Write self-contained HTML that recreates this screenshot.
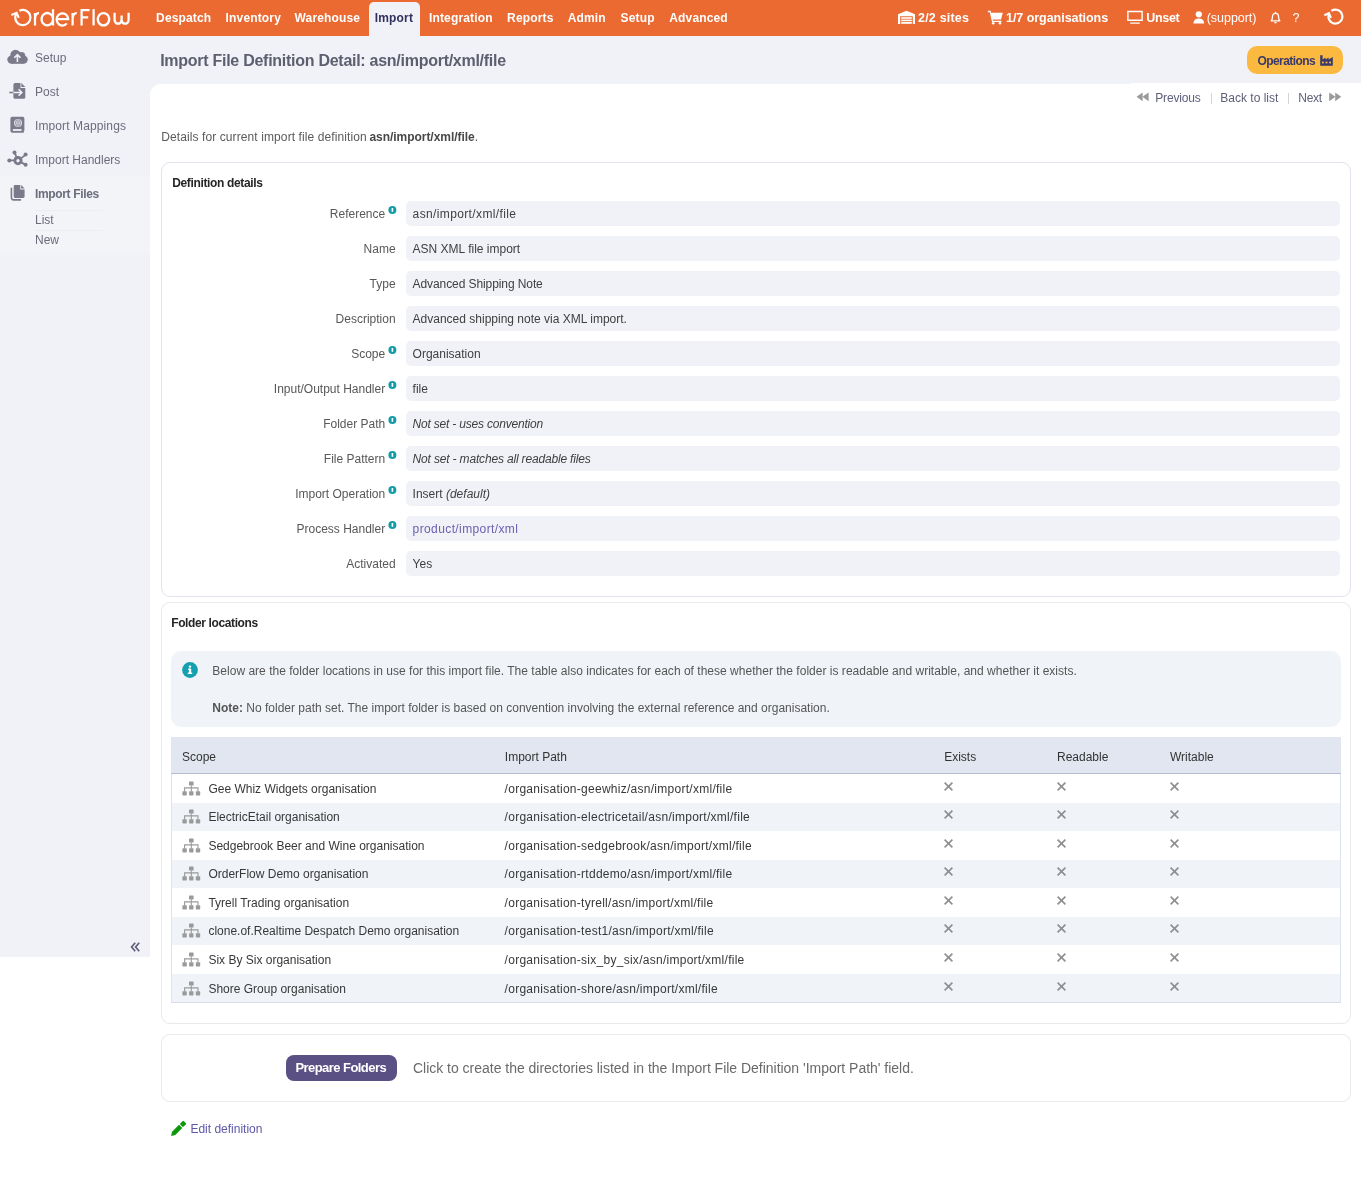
<!DOCTYPE html>
<html><head><meta charset="utf-8"><style>
*{box-sizing:border-box;margin:0;padding:0}
html,body{width:1361px;height:1182px;overflow:hidden;background:#fff;font-family:"Liberation Sans",sans-serif;font-size:12px;color:#444}
.a{position:absolute}
.t{position:absolute;white-space:nowrap;line-height:1}
.nav{position:absolute;font-weight:bold;font-size:12px;color:#fff;white-space:nowrap;line-height:12px}
.panel{position:absolute;left:161px;width:1190px;border:1px solid #dfe4ef;border-radius:9px;background:#fff}
.box{position:absolute;left:406px;width:934px;height:25px;background:#f0f2f7;border-radius:5px}
</style></head><body>
<div style="position:absolute;left:0;top:0;width:1361px;height:1182px;overflow:hidden;will-change:transform">
<div class="a" style="left:0;top:0;width:1361px;height:36px;background:#ea6a31"></div>
<div class="a" style="left:0;top:36px;width:150px;height:921px;background:#f1f2f7"></div>
<div class="a" style="left:150px;top:36px;width:1211px;height:60px;background:#f1f2f7"></div>
<div class="a" style="left:150px;top:84px;width:1211px;height:1098px;background:#fff;border-top-left-radius:11px"></div>
<div class="a" style="left:1131px;top:83px;width:230px;height:1px;background:#fff"></div>
<div class="a" style="left:0;top:176px;width:150px;height:77px;background:#f3f4f8"></div>
<svg class="a" style="left:0;top:0" width="140" height="36" viewBox="0 0 140 36" fill="none" stroke="#fff" stroke-width="2.25" stroke-linecap="butt">
<path d="M19.3 10.8 A7.6 7.6 0 1 1 16.2 13.8" stroke-width="2.1"/>
<path d="M11.4 15 L16.6 12.8 L18.8 17.8" stroke-width="2.1" stroke-linejoin="miter"/>
<path d="M35 25.4 V13 M35 18.5 Q35.5 13 39 13.2"/>
<path d="M53 9.2 V25.4 M53 19.2 A5.7 6.1 0 1 1 53 19.1"/>
<path d="M56.9 19.2 H68.2 A5.8 6.1 0 1 0 66.8 23.4"/>
<path d="M72.6 25.4 V13 M72.6 18.5 Q73.1 13 76.8 13.2"/>
<path d="M81.6 25.4 V10.2 H89.6 M81.6 17.3 H88.2"/>
<path d="M93.6 9.2 V25.4"/>
<path d="M103.5 13.2 A5.7 6.1 0 1 1 103.49 13.2 Z"/>
<path d="M114.6 12.8 V20.2 A3.6 4.6 0 0 0 121.6 20.2 V15.5 M121.6 20.2 A3.6 4.6 0 0 0 128.6 20.2 V12.8"/>
</svg>
<div class="a" style="left:369px;top:2px;width:51px;height:34px;background:#f1f2f7;border-radius:5px 5px 0 0"></div>
<div class="t" style="left:156.10px;top:12.01px;font-size:12px;color:#fff;font-weight:bold;letter-spacing:0.15px">Despatch</div>
<div class="t" style="left:225.60px;top:12.01px;font-size:12px;color:#fff;font-weight:bold;letter-spacing:0.15px">Inventory</div>
<div class="t" style="left:294.60px;top:12.01px;font-size:12px;color:#fff;font-weight:bold;letter-spacing:0.15px">Warehouse</div>
<div class="t" style="left:374.80px;top:12.01px;font-size:12px;color:#33315f;font-weight:bold;letter-spacing:0.15px">Import</div>
<div class="t" style="left:429.00px;top:12.01px;font-size:12px;color:#fff;font-weight:bold;letter-spacing:0.15px">Integration</div>
<div class="t" style="left:507.10px;top:12.01px;font-size:12px;color:#fff;font-weight:bold;letter-spacing:0.15px">Reports</div>
<div class="t" style="left:567.70px;top:12.01px;font-size:12px;color:#fff;font-weight:bold;letter-spacing:0.15px">Admin</div>
<div class="t" style="left:620.60px;top:12.01px;font-size:12px;color:#fff;font-weight:bold;letter-spacing:0.15px">Setup</div>
<div class="t" style="left:669.30px;top:12.01px;font-size:12px;color:#fff;font-weight:bold;letter-spacing:0.15px">Advanced</div>
<div class="t" style="left:918.00px;top:11.76px;font-size:12.5px;color:#fff;font-weight:bold;letter-spacing:0.2px">2/2 sites</div>
<div class="t" style="left:1006.00px;top:11.76px;font-size:12.5px;color:#fff;font-weight:bold;letter-spacing:-0.04px">1/7 organisations</div>
<div class="t" style="left:1146.20px;top:11.76px;font-size:12.5px;color:#fff;font-weight:bold;letter-spacing:-0.3px">Unset</div>
<div class="t" style="left:1206.70px;top:11.76px;font-size:12.5px;color:#fff;letter-spacing:-0.03px">(support)</div>
<div class="t" style="left:1292.60px;top:11.76px;font-size:12.5px;color:#fff;">?</div>
<svg class="a" style="left:897px;top:10px" width="19" height="15" viewBox="0 0 19 15" fill="#fff">
<path d="M9.5 0.8 L18 4.2 V14 H15.8 V6.2 H3.2 V14 H1 V4.2 Z"/>
<rect x="4.2" y="7.2" width="10.6" height="1.6"/><rect x="4.2" y="9.6" width="10.6" height="1.6"/><rect x="4.2" y="12" width="10.6" height="1.8"/>
</svg>
<svg class="a" style="left:987px;top:10px" width="17" height="15" viewBox="0 0 17 15" fill="#fff">
<path d="M0.8 0.8 H3.6 L4.2 2.8 H15.8 L14 9.4 H5.6 L6 10.8 H14.4 V12 H5 L2.8 2.2 H0.8 Z"/>
<circle cx="6.2" cy="13.2" r="1.3"/><circle cx="13" cy="13.2" r="1.3"/>
</svg>
<svg class="a" style="left:1126px;top:10px" width="18" height="15" viewBox="0 0 18 15" fill="#fff">
<path d="M1.2 0.8 H16.8 V11 H1.2 Z M2.6 2.2 V9.6 H15.4 V2.2 Z" fill-rule="evenodd"/>
<rect x="4" y="12.4" width="10" height="1.4" rx="0.7"/>
</svg>
<svg class="a" style="left:1193px;top:11px" width="12" height="13" viewBox="0 0 12 13" fill="#fff">
<circle cx="5.8" cy="3.3" r="3.1"/><path d="M0.4 12.6 Q0.6 7.4 5.8 7.4 Q11 7.4 11.2 12.6 Z"/>
</svg>
<svg class="a" style="left:1269px;top:11px" width="13" height="13" viewBox="0 0 13 13" fill="none" stroke="#fff" stroke-width="1.3">
<path d="M2.2 9.8 Q3.4 8.6 3.4 6.2 Q3.4 2.4 6.5 2.4 Q9.6 2.4 9.6 6.2 Q9.6 8.6 10.8 9.8 Z" stroke-linejoin="round"/>
<path d="M5.4 11.6 H7.6" stroke-width="1.4"/><path d="M6.5 0.8 V2.2"/>
</svg>
<svg class="a" style="left:1318px;top:4px" width="30" height="26" viewBox="1318 4 30 26" fill="none" stroke="#fff" stroke-width="2.1">
<path d="M1331.4 10.9 A7 7 0 1 1 1329.1 13.6"/>
<path d="M1324.3 15.2 L1328.9 13.2 L1330.9 18" stroke-linejoin="miter"/>
</svg>
<div class="t" style="left:35.00px;top:52.01px;font-size:12px;color:#6b6c7c;">Setup</div>
<div class="t" style="left:35.00px;top:86.01px;font-size:12px;color:#6b6c7c;">Post</div>
<div class="t" style="left:35.00px;top:120.01px;font-size:12px;color:#6b6c7c;letter-spacing:0.11px">Import Mappings</div>
<div class="t" style="left:35.00px;top:154.01px;font-size:12px;color:#6b6c7c;">Import Handlers</div>
<div class="t" style="left:35.00px;top:188.01px;font-size:12px;color:#6b6c7c;font-weight:bold;letter-spacing:-0.35px">Import Files</div>
<div class="t" style="left:35.00px;top:214.01px;font-size:12px;color:#6b6c7c;">List</div>
<div class="t" style="left:35.00px;top:234.01px;font-size:12px;color:#6b6c7c;">New</div>
<div class="a" style="left:35px;top:210px;width:68px;height:1px;background:#ecedf2"></div>
<div class="a" style="left:35px;top:230px;width:68px;height:1px;background:#ecedf2"></div>
<svg class="a" style="left:0;top:40px" width="34" height="170" viewBox="0 40 34 170">
<g fill="#7a7a8b">
<circle cx="11.5" cy="59.6" r="4.2"/><circle cx="15.5" cy="55" r="5.2"/><circle cx="21.5" cy="55.6" r="3.7"/><circle cx="23.6" cy="59.6" r="4.2"/><rect x="11.5" y="56" width="12.1" height="7.8"/>
</g>
<path d="M17.4 62 V54.8 M14.3 57.8 L17.4 54.6 L20.5 57.8" stroke="#f1f2f7" stroke-width="1.6" fill="none"/>
<path d="M15 83.1 H20.5 V87.9 H25.3 V97.2 Q25.3 98.8 23.7 98.8 H15 Q13.4 98.8 13.4 97.2 V84.7 Q13.4 83.1 15 83.1 Z" fill="#7a7a8b"/>
<path d="M21.3 83.1 L25.3 87.1 H21.3 Z" fill="#7a7a8b"/>
<path d="M9.3 92.5 H13.4" stroke="#7a7a8b" stroke-width="1.6"/>
<path d="M13.4 92.5 H21.2 M18.6 89.3 L21.8 92.5 L18.6 95.7" stroke="#f1f2f7" stroke-width="1.6" fill="none"/>
<path d="M12 116.8 H22.8 Q24.4 116.8 24.4 118.4 V130.4 Q23.8 130.9 23.8 131.6 V132.8 H12.4 Q10.4 132.8 10.4 130.8 V118.4 Q10.4 116.8 12 116.8 Z" fill="#7a7a8b"/>
<rect x="12.9" y="129.1" width="8.6" height="1.8" fill="#f1f2f7"/>
<circle cx="18" cy="122.9" r="3.9" fill="#f1f2f7"/>
<path d="M18 119.2 V126.6 M16.3 119.6 Q15.2 122.9 16.3 126.2 M19.7 119.6 Q20.8 122.9 19.7 126.2" stroke="#7a7a8b" stroke-width="1" fill="none"/>
<g stroke="#7a7a8b" stroke-width="1.8" fill="none"><path d="M9.1 160.4 H18 M14.5 152.4 L18 160.6 L25.8 154.6 M18 160.6 L25.8 164.9"/></g>
<circle cx="18" cy="160.6" r="3.2" fill="none" stroke="#7a7a8b" stroke-width="2.8"/><circle cx="18" cy="160.6" r="1.6" fill="#f1f2f7"/>
<g fill="#7a7a8b"><circle cx="9.3" cy="160.4" r="2"/><circle cx="14.5" cy="152.6" r="2"/><circle cx="25.6" cy="154.6" r="2"/><circle cx="25.6" cy="164.8" r="2"/></g>
<path d="M15 185.1 H20.3 V189.6 H24.6 V196.6 Q24.6 198 23.2 198 H15 Q13.7 198 13.7 196.6 V186.4 Q13.7 185.1 15 185.1 Z" fill="#7a7a8b"/>
<path d="M21.1 185.1 L24.6 188.6 H21.1 Z" fill="#7a7a8b"/>
<path d="M11.4 187.8 V197.6 Q11.4 199.9 13.7 199.9 H21.1" stroke="#7a7a8b" stroke-width="1.6" fill="none"/>
</svg>
<svg class="a" style="left:126px;top:938px" width="18" height="18" viewBox="126 938 18 18" fill="none" stroke="#5f6078" stroke-width="1.7"><path d="M135.2 942.8 L131.6 947 L135.2 951.2 M139.2 942.8 L135.6 947 L139.2 951.2"/></svg>
<div class="t" style="left:160.20px;top:52.51px;font-size:16px;color:#5d5e6f;font-weight:bold;letter-spacing:-0.27px">Import File Definition Detail: asn/import/xml/file</div>
<div class="a" style="left:1247px;top:46px;width:96px;height:28px;background:#fbba3f;border-radius:10px"></div>
<div class="t" style="left:1257.40px;top:55.01px;font-size:12px;color:#3a396a;font-weight:bold;letter-spacing:-0.55px">Operations</div>
<svg class="a" style="left:1320px;top:55px" width="13" height="11" viewBox="0 0 13 11" fill="#3a396a">
<path d="M0.2 0.2 H2.6 V4.4 L5.6 2.4 V4.4 L8.6 2.4 V4.4 L12.8 2 V10.8 H0.2 Z"/>
<rect x="2" y="6.6" width="1.8" height="1.8" fill="#fbba3f"/><rect x="5.6" y="6.6" width="1.8" height="1.8" fill="#fbba3f"/><rect x="9.2" y="6.6" width="1.8" height="1.8" fill="#fbba3f"/>
</svg>
<svg class="a" style="left:1136px;top:92px" width="14" height="10" viewBox="0 0 14 10" fill="#9a9a9a">
<path d="M0.6 4.8 L6.6 0.4 V9.2 Z"/><path d="M6.4 4.8 L12.6 0.4 V9.2 Z"/>
</svg>
<div class="t" style="left:1155.20px;top:92.01px;font-size:12px;color:#5f607a;letter-spacing:-0.15px">Previous</div>
<div class="a" style="left:1210.5px;top:93px;width:1px;height:11px;background:#d2d2d8"></div>
<div class="t" style="left:1220.30px;top:92.01px;font-size:12px;color:#5f607a;">Back to list</div>
<div class="a" style="left:1288px;top:93px;width:1px;height:11px;background:#d2d2d8"></div>
<div class="t" style="left:1298.30px;top:92.01px;font-size:12px;color:#5f607a;letter-spacing:-0.3px">Next</div>
<svg class="a" style="left:1328px;top:92px" width="14" height="10" viewBox="0 0 14 10" fill="#9a9a9a">
<path d="M13.2 4.8 L7.2 0.4 V9.2 Z"/><path d="M7.4 4.8 L1.2 0.4 V9.2 Z"/>
</svg>
<div class="t" style="left:161.20px;top:131.01px;font-size:12px;color:#5a5a5a;letter-spacing:0.1px">Details for current import file definition</div>
<div class="t" style="left:369.40px;top:131.01px;font-size:12px;color:#5a5a5a;"><b style='color:#484848;letter-spacing:-0.04px'>asn/import/xml/file</b>.</div>
<div class="panel" style="top:162px;height:435px"></div>
<div class="t" style="left:172.20px;top:177.01px;font-size:12px;color:#262626;font-weight:bold;letter-spacing:-0.35px">Definition details</div>
<div class="box" style="top:201px"></div>
<div class="t" style="right:975.80px;top:208.01px;font-size:12px;color:#585858">Reference</div>
<svg class="a" style="left:387.6px;top:206.0px" width="9" height="9" viewBox="0 0 9 9"><circle cx="4.4" cy="4" r="4" fill="#149ba8"/><rect x="3.6" y="2" width="1.6" height="3.8" fill="#fff"/></svg>
<div class="t" style="left:412.60px;top:208.01px;font-size:12px;color:#404040;"><span style='letter-spacing:0.37px'>asn/import/xml/file</span></div>
<div class="box" style="top:236px"></div>
<div class="t" style="right:965.40px;top:243.01px;font-size:12px;color:#585858">Name</div>
<div class="t" style="left:412.60px;top:243.01px;font-size:12px;color:#404040;">ASN XML file import</div>
<div class="box" style="top:271px"></div>
<div class="t" style="right:965.40px;top:278.01px;font-size:12px;color:#585858">Type</div>
<div class="t" style="left:412.60px;top:278.01px;font-size:12px;color:#404040;"><span style='letter-spacing:-0.09px'>Advanced Shipping Note</span></div>
<div class="box" style="top:306px"></div>
<div class="t" style="right:965.40px;top:313.01px;font-size:12px;color:#585858">Description</div>
<div class="t" style="left:412.60px;top:313.01px;font-size:12px;color:#404040;">Advanced shipping note via XML import.</div>
<div class="box" style="top:341px"></div>
<div class="t" style="right:975.80px;top:348.01px;font-size:12px;color:#585858">Scope</div>
<svg class="a" style="left:387.6px;top:346.0px" width="9" height="9" viewBox="0 0 9 9"><circle cx="4.4" cy="4" r="4" fill="#149ba8"/><rect x="3.6" y="2" width="1.6" height="3.8" fill="#fff"/></svg>
<div class="t" style="left:412.60px;top:348.01px;font-size:12px;color:#404040;">Organisation</div>
<div class="box" style="top:376px"></div>
<div class="t" style="right:975.80px;top:383.01px;font-size:12px;color:#585858">Input/Output Handler</div>
<svg class="a" style="left:387.6px;top:381.0px" width="9" height="9" viewBox="0 0 9 9"><circle cx="4.4" cy="4" r="4" fill="#149ba8"/><rect x="3.6" y="2" width="1.6" height="3.8" fill="#fff"/></svg>
<div class="t" style="left:412.60px;top:383.01px;font-size:12px;color:#404040;">file</div>
<div class="box" style="top:411px"></div>
<div class="t" style="right:975.80px;top:418.01px;font-size:12px;color:#585858">Folder Path</div>
<svg class="a" style="left:387.6px;top:416.0px" width="9" height="9" viewBox="0 0 9 9"><circle cx="4.4" cy="4" r="4" fill="#149ba8"/><rect x="3.6" y="2" width="1.6" height="3.8" fill="#fff"/></svg>
<div class="t" style="left:412.60px;top:418.01px;font-size:12px;color:#404040;"><i style='letter-spacing:-0.2px'>Not set - uses convention</i></div>
<div class="box" style="top:446px"></div>
<div class="t" style="right:975.80px;top:453.01px;font-size:12px;color:#585858">File Pattern</div>
<svg class="a" style="left:387.6px;top:451.0px" width="9" height="9" viewBox="0 0 9 9"><circle cx="4.4" cy="4" r="4" fill="#149ba8"/><rect x="3.6" y="2" width="1.6" height="3.8" fill="#fff"/></svg>
<div class="t" style="left:412.60px;top:453.01px;font-size:12px;color:#404040;"><i style='letter-spacing:-0.17px'>Not set - matches all readable files</i></div>
<div class="box" style="top:481px"></div>
<div class="t" style="right:975.80px;top:488.01px;font-size:12px;color:#585858">Import Operation</div>
<svg class="a" style="left:387.6px;top:486.0px" width="9" height="9" viewBox="0 0 9 9"><circle cx="4.4" cy="4" r="4" fill="#149ba8"/><rect x="3.6" y="2" width="1.6" height="3.8" fill="#fff"/></svg>
<div class="t" style="left:412.60px;top:488.01px;font-size:12px;color:#404040;">Insert <i>(default)</i></div>
<div class="box" style="top:516px"></div>
<div class="t" style="right:975.80px;top:523.01px;font-size:12px;color:#585858">Process Handler</div>
<svg class="a" style="left:387.6px;top:521.0px" width="9" height="9" viewBox="0 0 9 9"><circle cx="4.4" cy="4" r="4" fill="#149ba8"/><rect x="3.6" y="2" width="1.6" height="3.8" fill="#fff"/></svg>
<div class="t" style="left:412.60px;top:523.01px;font-size:12px;color:#404040;"><span style='color:#6a5fb0;letter-spacing:0.39px'>product/import/xml</span></div>
<div class="box" style="top:551px"></div>
<div class="t" style="right:965.40px;top:558.01px;font-size:12px;color:#585858">Activated</div>
<div class="t" style="left:412.60px;top:558.01px;font-size:12px;color:#404040;">Yes</div>
<div class="panel" style="top:602px;height:422px;border-color:#e9e9ec"></div>
<div class="t" style="left:171.20px;top:617.01px;font-size:12px;color:#262626;font-weight:bold;letter-spacing:-0.38px">Folder locations</div>
<div class="a" style="left:171px;top:651px;width:1170px;height:76px;background:#f0f3f8;border-radius:10px"></div>
<svg class="a" style="left:182px;top:662px" width="16" height="16" viewBox="0 0 16 16"><circle cx="8" cy="8" r="7.9" fill="#14a0ae"/><rect x="6.9" y="6.6" width="2.3" height="5" fill="#fff"/><rect x="5.8" y="10.6" width="4.4" height="1.4" fill="#fff"/><rect x="6" y="6.6" width="2" height="1.2" fill="#fff"/><circle cx="8" cy="4.6" r="1.2" fill="#fff"/></svg>
<div class="t" style="left:212.30px;top:665.01px;font-size:12px;color:#555;letter-spacing:0.017px">Below are the folder locations in use for this import file. The table also indicates for each of these whether the folder is readable and writable, and whether it exists.</div>
<div class="t" style="left:212.30px;top:702.01px;font-size:12px;color:#555;"><b>Note:</b> No folder path set. The import folder is based on convention involving the external reference and organisation.</div>
<div class="a" style="left:171px;top:737px;width:1170px;height:36px;background:#e2e6f0"></div>
<div class="a" style="left:171px;top:772.5px;width:1170px;height:1.5px;background:#b6bbd2"></div>
<div class="t" style="left:182.00px;top:751.01px;font-size:12px;color:#333;">Scope</div>
<div class="t" style="left:504.80px;top:751.01px;font-size:12px;color:#333;">Import Path</div>
<div class="t" style="left:944.20px;top:751.01px;font-size:12px;color:#333;">Exists</div>
<div class="t" style="left:1057.00px;top:751.01px;font-size:12px;color:#333;">Readable</div>
<div class="t" style="left:1170.00px;top:751.01px;font-size:12px;color:#333;">Writable</div>
<svg class="a" style="left:182px;top:780.60px" width="19" height="15" viewBox="0 0 19 15" fill="#9a9a9a">
<rect x="7" y="0.4" width="4.6" height="4.2" rx="0.6"/><rect x="0.4" y="10.2" width="4.4" height="4.2" rx="0.6"/><rect x="7.1" y="10.2" width="4.4" height="4.2" rx="0.6"/><rect x="13.8" y="10.2" width="4.4" height="4.2" rx="0.6"/>
<path d="M9.3 4.4 V10.4 M2.6 10.4 V6.9 H16 V10.4" stroke="#9a9a9a" stroke-width="1.1" fill="none"/>
</svg>
<div class="t" style="left:208.40px;top:783.01px;font-size:12px;color:#383838;">Gee Whiz Widgets organisation</div>
<div class="t" style="left:504.60px;top:783.01px;font-size:12px;color:#383838;letter-spacing:0.27px">/organisation-geewhiz/asn/import/xml/file</div>
<svg class="a" style="left:944px;top:781.60px" width="9" height="9" viewBox="0 0 9 9"><path d="M0.6 0.6 L8.4 8.4 M8.4 0.6 L0.6 8.4" stroke="#8e8e8e" stroke-width="1.6"/></svg>
<svg class="a" style="left:1057px;top:781.60px" width="9" height="9" viewBox="0 0 9 9"><path d="M0.6 0.6 L8.4 8.4 M8.4 0.6 L0.6 8.4" stroke="#8e8e8e" stroke-width="1.6"/></svg>
<svg class="a" style="left:1170px;top:781.60px" width="9" height="9" viewBox="0 0 9 9"><path d="M0.6 0.6 L8.4 8.4 M8.4 0.6 L0.6 8.4" stroke="#8e8e8e" stroke-width="1.6"/></svg>
<div class="a" style="left:171px;top:803px;width:1170px;height:28.0px;background:#f0f3f8"></div>
<svg class="a" style="left:182px;top:809.17px" width="19" height="15" viewBox="0 0 19 15" fill="#9a9a9a">
<rect x="7" y="0.4" width="4.6" height="4.2" rx="0.6"/><rect x="0.4" y="10.2" width="4.4" height="4.2" rx="0.6"/><rect x="7.1" y="10.2" width="4.4" height="4.2" rx="0.6"/><rect x="13.8" y="10.2" width="4.4" height="4.2" rx="0.6"/>
<path d="M9.3 4.4 V10.4 M2.6 10.4 V6.9 H16 V10.4" stroke="#9a9a9a" stroke-width="1.1" fill="none"/>
</svg>
<div class="t" style="left:208.40px;top:811.01px;font-size:12px;color:#383838;">ElectricEtail organisation</div>
<div class="t" style="left:504.60px;top:811.01px;font-size:12px;color:#383838;letter-spacing:0.27px">/organisation-electricetail/asn/import/xml/file</div>
<svg class="a" style="left:944px;top:810.17px" width="9" height="9" viewBox="0 0 9 9"><path d="M0.6 0.6 L8.4 8.4 M8.4 0.6 L0.6 8.4" stroke="#8e8e8e" stroke-width="1.6"/></svg>
<svg class="a" style="left:1057px;top:810.17px" width="9" height="9" viewBox="0 0 9 9"><path d="M0.6 0.6 L8.4 8.4 M8.4 0.6 L0.6 8.4" stroke="#8e8e8e" stroke-width="1.6"/></svg>
<svg class="a" style="left:1170px;top:810.17px" width="9" height="9" viewBox="0 0 9 9"><path d="M0.6 0.6 L8.4 8.4 M8.4 0.6 L0.6 8.4" stroke="#8e8e8e" stroke-width="1.6"/></svg>
<svg class="a" style="left:182px;top:837.74px" width="19" height="15" viewBox="0 0 19 15" fill="#9a9a9a">
<rect x="7" y="0.4" width="4.6" height="4.2" rx="0.6"/><rect x="0.4" y="10.2" width="4.4" height="4.2" rx="0.6"/><rect x="7.1" y="10.2" width="4.4" height="4.2" rx="0.6"/><rect x="13.8" y="10.2" width="4.4" height="4.2" rx="0.6"/>
<path d="M9.3 4.4 V10.4 M2.6 10.4 V6.9 H16 V10.4" stroke="#9a9a9a" stroke-width="1.1" fill="none"/>
</svg>
<div class="t" style="left:208.40px;top:840.01px;font-size:12px;color:#383838;">Sedgebrook Beer and Wine organisation</div>
<div class="t" style="left:504.60px;top:840.01px;font-size:12px;color:#383838;letter-spacing:0.27px">/organisation-sedgebrook/asn/import/xml/file</div>
<svg class="a" style="left:944px;top:838.74px" width="9" height="9" viewBox="0 0 9 9"><path d="M0.6 0.6 L8.4 8.4 M8.4 0.6 L0.6 8.4" stroke="#8e8e8e" stroke-width="1.6"/></svg>
<svg class="a" style="left:1057px;top:838.74px" width="9" height="9" viewBox="0 0 9 9"><path d="M0.6 0.6 L8.4 8.4 M8.4 0.6 L0.6 8.4" stroke="#8e8e8e" stroke-width="1.6"/></svg>
<svg class="a" style="left:1170px;top:838.74px" width="9" height="9" viewBox="0 0 9 9"><path d="M0.6 0.6 L8.4 8.4 M8.4 0.6 L0.6 8.4" stroke="#8e8e8e" stroke-width="1.6"/></svg>
<div class="a" style="left:171px;top:860px;width:1170px;height:28.0px;background:#f0f3f8"></div>
<svg class="a" style="left:182px;top:866.31px" width="19" height="15" viewBox="0 0 19 15" fill="#9a9a9a">
<rect x="7" y="0.4" width="4.6" height="4.2" rx="0.6"/><rect x="0.4" y="10.2" width="4.4" height="4.2" rx="0.6"/><rect x="7.1" y="10.2" width="4.4" height="4.2" rx="0.6"/><rect x="13.8" y="10.2" width="4.4" height="4.2" rx="0.6"/>
<path d="M9.3 4.4 V10.4 M2.6 10.4 V6.9 H16 V10.4" stroke="#9a9a9a" stroke-width="1.1" fill="none"/>
</svg>
<div class="t" style="left:208.40px;top:868.01px;font-size:12px;color:#383838;">OrderFlow Demo organisation</div>
<div class="t" style="left:504.60px;top:868.01px;font-size:12px;color:#383838;letter-spacing:0.27px">/organisation-rtddemo/asn/import/xml/file</div>
<svg class="a" style="left:944px;top:867.31px" width="9" height="9" viewBox="0 0 9 9"><path d="M0.6 0.6 L8.4 8.4 M8.4 0.6 L0.6 8.4" stroke="#8e8e8e" stroke-width="1.6"/></svg>
<svg class="a" style="left:1057px;top:867.31px" width="9" height="9" viewBox="0 0 9 9"><path d="M0.6 0.6 L8.4 8.4 M8.4 0.6 L0.6 8.4" stroke="#8e8e8e" stroke-width="1.6"/></svg>
<svg class="a" style="left:1170px;top:867.31px" width="9" height="9" viewBox="0 0 9 9"><path d="M0.6 0.6 L8.4 8.4 M8.4 0.6 L0.6 8.4" stroke="#8e8e8e" stroke-width="1.6"/></svg>
<svg class="a" style="left:182px;top:894.88px" width="19" height="15" viewBox="0 0 19 15" fill="#9a9a9a">
<rect x="7" y="0.4" width="4.6" height="4.2" rx="0.6"/><rect x="0.4" y="10.2" width="4.4" height="4.2" rx="0.6"/><rect x="7.1" y="10.2" width="4.4" height="4.2" rx="0.6"/><rect x="13.8" y="10.2" width="4.4" height="4.2" rx="0.6"/>
<path d="M9.3 4.4 V10.4 M2.6 10.4 V6.9 H16 V10.4" stroke="#9a9a9a" stroke-width="1.1" fill="none"/>
</svg>
<div class="t" style="left:208.40px;top:897.01px;font-size:12px;color:#383838;">Tyrell Trading organisation</div>
<div class="t" style="left:504.60px;top:897.01px;font-size:12px;color:#383838;letter-spacing:0.27px">/organisation-tyrell/asn/import/xml/file</div>
<svg class="a" style="left:944px;top:895.88px" width="9" height="9" viewBox="0 0 9 9"><path d="M0.6 0.6 L8.4 8.4 M8.4 0.6 L0.6 8.4" stroke="#8e8e8e" stroke-width="1.6"/></svg>
<svg class="a" style="left:1057px;top:895.88px" width="9" height="9" viewBox="0 0 9 9"><path d="M0.6 0.6 L8.4 8.4 M8.4 0.6 L0.6 8.4" stroke="#8e8e8e" stroke-width="1.6"/></svg>
<svg class="a" style="left:1170px;top:895.88px" width="9" height="9" viewBox="0 0 9 9"><path d="M0.6 0.6 L8.4 8.4 M8.4 0.6 L0.6 8.4" stroke="#8e8e8e" stroke-width="1.6"/></svg>
<div class="a" style="left:171px;top:917px;width:1170px;height:28.0px;background:#f0f3f8"></div>
<svg class="a" style="left:182px;top:923.45px" width="19" height="15" viewBox="0 0 19 15" fill="#9a9a9a">
<rect x="7" y="0.4" width="4.6" height="4.2" rx="0.6"/><rect x="0.4" y="10.2" width="4.4" height="4.2" rx="0.6"/><rect x="7.1" y="10.2" width="4.4" height="4.2" rx="0.6"/><rect x="13.8" y="10.2" width="4.4" height="4.2" rx="0.6"/>
<path d="M9.3 4.4 V10.4 M2.6 10.4 V6.9 H16 V10.4" stroke="#9a9a9a" stroke-width="1.1" fill="none"/>
</svg>
<div class="t" style="left:208.40px;top:925.01px;font-size:12px;color:#383838;">clone.of.Realtime Despatch Demo organisation</div>
<div class="t" style="left:504.60px;top:925.01px;font-size:12px;color:#383838;letter-spacing:0.27px">/organisation-test1/asn/import/xml/file</div>
<svg class="a" style="left:944px;top:924.45px" width="9" height="9" viewBox="0 0 9 9"><path d="M0.6 0.6 L8.4 8.4 M8.4 0.6 L0.6 8.4" stroke="#8e8e8e" stroke-width="1.6"/></svg>
<svg class="a" style="left:1057px;top:924.45px" width="9" height="9" viewBox="0 0 9 9"><path d="M0.6 0.6 L8.4 8.4 M8.4 0.6 L0.6 8.4" stroke="#8e8e8e" stroke-width="1.6"/></svg>
<svg class="a" style="left:1170px;top:924.45px" width="9" height="9" viewBox="0 0 9 9"><path d="M0.6 0.6 L8.4 8.4 M8.4 0.6 L0.6 8.4" stroke="#8e8e8e" stroke-width="1.6"/></svg>
<svg class="a" style="left:182px;top:952.02px" width="19" height="15" viewBox="0 0 19 15" fill="#9a9a9a">
<rect x="7" y="0.4" width="4.6" height="4.2" rx="0.6"/><rect x="0.4" y="10.2" width="4.4" height="4.2" rx="0.6"/><rect x="7.1" y="10.2" width="4.4" height="4.2" rx="0.6"/><rect x="13.8" y="10.2" width="4.4" height="4.2" rx="0.6"/>
<path d="M9.3 4.4 V10.4 M2.6 10.4 V6.9 H16 V10.4" stroke="#9a9a9a" stroke-width="1.1" fill="none"/>
</svg>
<div class="t" style="left:208.40px;top:954.01px;font-size:12px;color:#383838;">Six By Six organisation</div>
<div class="t" style="left:504.60px;top:954.01px;font-size:12px;color:#383838;letter-spacing:0.27px">/organisation-six_by_six/asn/import/xml/file</div>
<svg class="a" style="left:944px;top:953.02px" width="9" height="9" viewBox="0 0 9 9"><path d="M0.6 0.6 L8.4 8.4 M8.4 0.6 L0.6 8.4" stroke="#8e8e8e" stroke-width="1.6"/></svg>
<svg class="a" style="left:1057px;top:953.02px" width="9" height="9" viewBox="0 0 9 9"><path d="M0.6 0.6 L8.4 8.4 M8.4 0.6 L0.6 8.4" stroke="#8e8e8e" stroke-width="1.6"/></svg>
<svg class="a" style="left:1170px;top:953.02px" width="9" height="9" viewBox="0 0 9 9"><path d="M0.6 0.6 L8.4 8.4 M8.4 0.6 L0.6 8.4" stroke="#8e8e8e" stroke-width="1.6"/></svg>
<div class="a" style="left:171px;top:974px;width:1170px;height:28.5px;background:#f0f3f8"></div>
<svg class="a" style="left:182px;top:980.59px" width="19" height="15" viewBox="0 0 19 15" fill="#9a9a9a">
<rect x="7" y="0.4" width="4.6" height="4.2" rx="0.6"/><rect x="0.4" y="10.2" width="4.4" height="4.2" rx="0.6"/><rect x="7.1" y="10.2" width="4.4" height="4.2" rx="0.6"/><rect x="13.8" y="10.2" width="4.4" height="4.2" rx="0.6"/>
<path d="M9.3 4.4 V10.4 M2.6 10.4 V6.9 H16 V10.4" stroke="#9a9a9a" stroke-width="1.1" fill="none"/>
</svg>
<div class="t" style="left:208.40px;top:983.01px;font-size:12px;color:#383838;">Shore Group organisation</div>
<div class="t" style="left:504.60px;top:983.01px;font-size:12px;color:#383838;letter-spacing:0.27px">/organisation-shore/asn/import/xml/file</div>
<svg class="a" style="left:944px;top:981.59px" width="9" height="9" viewBox="0 0 9 9"><path d="M0.6 0.6 L8.4 8.4 M8.4 0.6 L0.6 8.4" stroke="#8e8e8e" stroke-width="1.6"/></svg>
<svg class="a" style="left:1057px;top:981.59px" width="9" height="9" viewBox="0 0 9 9"><path d="M0.6 0.6 L8.4 8.4 M8.4 0.6 L0.6 8.4" stroke="#8e8e8e" stroke-width="1.6"/></svg>
<svg class="a" style="left:1170px;top:981.59px" width="9" height="9" viewBox="0 0 9 9"><path d="M0.6 0.6 L8.4 8.4 M8.4 0.6 L0.6 8.4" stroke="#8e8e8e" stroke-width="1.6"/></svg>
<div class="a" style="left:171px;top:774px;width:1px;height:229px;background:#dde3ef"></div>
<div class="a" style="left:1340px;top:774px;width:1px;height:229px;background:#dde3ef"></div>
<div class="a" style="left:171px;top:1002px;width:1170px;height:1px;background:#d6dcea"></div>
<div class="panel" style="top:1034px;height:68px;border-color:#e9e9ec"></div>
<div class="a" style="left:286px;top:1055px;width:111px;height:26px;background:#5b5083;border-radius:8px"></div>
<div class="t" style="left:295.40px;top:1061.01px;font-size:13px;color:#fff;font-weight:bold;letter-spacing:-0.55px">Prepare Folders</div>
<div class="t" style="left:413.00px;top:1061.01px;font-size:14px;color:#6a6a6a;letter-spacing:-0.02px">Click to create the directories listed in the Import File Definition 'Import Path' field.</div>
<svg class="a" style="left:165px;top:1115px" width="26" height="26" viewBox="165 1115 26 26" fill="#0b990b">
<g transform="translate(171 1136) rotate(-45)"><path d="M0 0 L3.8 -2.3 H13.6 V2.3 H3.8 Z"/><rect x="14.6" y="-2.3" width="5" height="4.6" rx="1"/></g>
</svg>
<div class="t" style="left:190.40px;top:1123.01px;font-size:12px;color:#5e58a8;">Edit definition</div>
</div>
</body></html>
